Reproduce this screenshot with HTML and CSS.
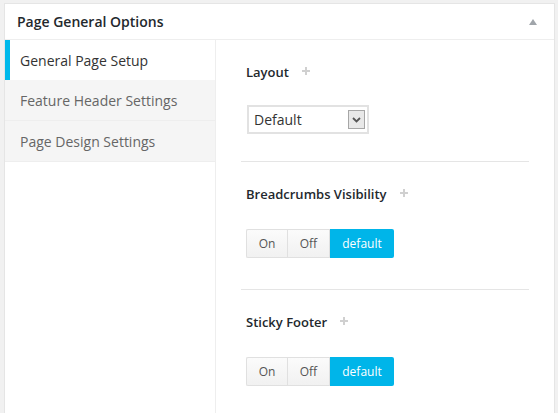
FILE: index.html
```html
<!DOCTYPE html>
<html>
<head>
<meta charset="utf-8">
<link rel="stylesheet" href="styles.css">
</head>
<body>
<div class="box">
  <div class="box-header">
    <h2 class="box-title">Page General Options</h2>
    <span class="toggle"></span>
  </div>
  <div class="box-body">
    <ul class="tabs">
      <li class="tab active">General Page Setup</li>
      <li class="tab">Feature Header Settings</li>
      <li class="tab">Page Design Settings</li>
    </ul>
    <div class="panel">
      <div class="section">
        <div class="label">Layout <span class="plus"></span></div>
        <div class="select">
          <span class="select-text">Default</span>
          <span class="select-btn"><svg width="9" height="6" viewBox="0 0 9 6"><path d="M1 1 L4.5 4.5 L8 1" fill="none" stroke="#555" stroke-width="1.8"/></svg></span>
        </div>
      </div>
      <div class="section">
        <div class="label">Breadcrumbs Visibility <span class="plus"></span></div>
        <div class="btn-group">
          <span class="btn btn-on">On</span><span class="btn btn-off">Off</span><span class="btn btn-default">default</span>
        </div>
      </div>
      <div class="section">
        <div class="label">Sticky Footer <span class="plus"></span></div>
        <div class="btn-group">
          <span class="btn btn-on">On</span><span class="btn btn-off">Off</span><span class="btn btn-default">default</span>
        </div>
      </div>
    </div>
  </div>
</div>
</body>
</html>
```
FILE: styles.css
```css
html, body {
  margin: 0;
  padding: 0;
  height: 100%;
  overflow: hidden;
}
body {
  background: #f1f1f1;
  font-family: "Open Sans", "Noto Sans", sans-serif;
  color: #444;
}
.box {
  margin: 3px 3px 0 4px;
  background: #fff;
  border: 1px solid #e5e5e5;
  border-bottom: none;
  height: calc(100% - 3px);
  display: flex;
  flex-direction: column;
  box-sizing: border-box;
}
.box-header {
  height: 36px;
  flex-shrink: 0;
  border-bottom: 1px solid #eee;
  display: flex;
  align-items: center;
  justify-content: space-between;
  padding: 0 17px 0 12px;
  box-sizing: border-box;
}
.box-title {
  margin: 0;
  font-size: 14px;
  font-weight: 600;
  color: #23282d;
  line-height: 20px;
}
.toggle {
  width: 0;
  height: 0;
  border-left: 4px solid transparent;
  border-right: 4px solid transparent;
  border-bottom: 6px solid #a0a5aa;
  margin-top: 0;
}
.box-body {
  flex: 1;
  display: flex;
}
.tabs {
  list-style: none;
  margin: 0;
  padding: 0;
  width: 210px;
  border-right: 1px solid #eee;
  flex-shrink: 0;
}
.tab {
  height: 41px;
  box-sizing: border-box;
  border-bottom: 1px solid #eee;
  background: #f5f5f5;
  padding-left: 15px;
  display: flex;
  align-items: center;
  font-size: 14px;
  color: #666;
}
.tab.active {
  height: 40px;
  background: #fff;
  color: #333;
  border-left: 5px solid #00b9eb;
  border-bottom: none;
  padding-left: 10px;
}
.panel {
  flex: 1;
}
.section {
  margin: 0 25px;
  padding: 24px 5px 27px;
  border-bottom: 1px solid #e5e5e5;
}
.section:last-child {
  border-bottom: none;
}
.label {
  font-size: 13px;
  font-weight: 600;
  color: #23282d;
  line-height: 16px;
  display: flex;
  align-items: center;
}
.plus {
  position: relative;
  width: 8px;
  height: 8px;
  margin-left: 13px;
  margin-top: -3px;
}
.plus::before, .plus::after {
  content: "";
  position: absolute;
  background: #d0d0d0;
}
.plus::before {
  left: 3px;
  top: 0;
  width: 2px;
  height: 8px;
}
.plus::after {
  left: 0;
  top: 3px;
  width: 8px;
  height: 2px;
}
.select {
  margin-top: 25px;
  margin-left: 1px;
  width: 122px;
  height: 29px;
  box-sizing: border-box;
  border: 2px solid #e2e2e2;
  display: flex;
  align-items: center;
  justify-content: space-between;
  padding: 0 2px 0 5px;
}
.select-text {
  font-size: 14px;
  color: #333;
}
.select-btn {
  width: 17px;
  height: 19px;
  box-sizing: border-box;
  border: 1px solid #a6a6a6;
  background: #e8e8e8;
  display: flex;
  align-items: center;
  justify-content: center;
}
.btn-group {
  margin-top: 27px;
  margin-bottom: 4px;
  display: flex;
  height: 29px;
}
.btn {
  display: flex;
  align-items: center;
  justify-content: center;
  box-sizing: border-box;
  font-size: 12px;
  height: 29px;
}
.btn-on, .btn-off {
  background: linear-gradient(#fbfbfb, #f1f1f1);
  border: 1px solid #e0e0e0;
  color: #555;
}
.btn-on {
  width: 41px;
  border-radius: 2px 0 0 2px;
  border-right: none;
}
.btn-off {
  width: 43px;
}
.btn-default {
  width: 64px;
  background: #00b5e9;
  color: #fff;
  border-radius: 0 2px 2px 0;
}
```
